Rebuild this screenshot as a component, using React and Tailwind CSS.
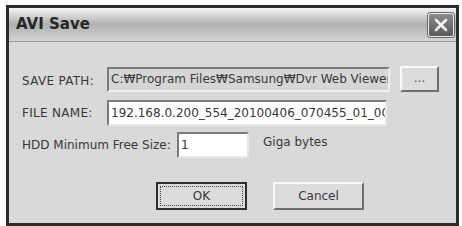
export default function App() {
  const font = { fontFamily: '"DejaVu Sans", Verdana, sans-serif' };
  return (
    <div className="w-[462px] h-[226px] bg-white pt-[5px] pl-[6px]" style={font}>
      <div className="w-[453px] h-[221px] border-[3px] border-[#2b2b2b] bg-[#d9d9d9] flex flex-col">
        {/* title bar */}
        <div className="h-[34px] flex items-center justify-between pl-[7px] pr-[2px] bg-gradient-to-b from-[#f6f6f6] via-[#b0b0b0] to-[#d4d4d4] border-b border-[#9a9a9a]">
          <span className="text-[15px] font-bold text-[#262626]">AVI Save</span>
          <button className="w-[26px] h-[24px] rounded-[3px] border border-[#e8e8e8] bg-gradient-to-b from-[#8c8c8c] to-[#5a5a5a] flex items-center justify-center shadow-[0_0_0_1px_#6a6a6a]">
            <svg width="14" height="14" viewBox="0 0 14 14">
              <path d="M2 2 L12 12 M12 2 L2 12" stroke="#f4f4f4" strokeWidth="2.6" strokeLinecap="round" />
            </svg>
          </button>
        </div>

        <div className="flex flex-col pl-[13px] pt-[24px] text-[12px] text-[#383838]">
          {/* save path */}
          <div className="flex items-center">
            <div className="w-[85px] pt-[3px] tracking-[0.3px]">SAVE PATH:</div>
            <div className="w-[283px] h-[25px] bg-[#d6d6d6] border-2 border-t-[#7a7a7a] border-l-[#7a7a7a] border-r-[#f0f0f0] border-b-[#f0f0f0] flex items-center pl-[2px] overflow-hidden whitespace-nowrap">
              C:₩Program Files₩Samsung₩Dvr Web Viewer
            </div>
            <button className="ml-[10px] w-[39px] h-[26px] bg-[#dcdcdc] border-2 border-t-[#f8f8f8] border-l-[#f8f8f8] border-r-[#6e6e6e] border-b-[#6e6e6e] flex items-center justify-center text-[#555] pb-[2px]">
              ...
            </button>
          </div>

          {/* file name */}
          <div className="flex items-center mt-[8px]">
            <div className="w-[85px] tracking-[0.3px]">FILE NAME:</div>
            <div className="w-[280px] h-[26px] bg-white border-2 border-t-[#7a7a7a] border-l-[#7a7a7a] border-r-[#e6e6e6] border-b-[#e6e6e6] flex items-center pl-[2px] overflow-hidden whitespace-nowrap">
              192.168.0.200_554_20100406_070455_01_00.avi
            </div>
          </div>

          {/* hdd */}
          <div className="flex mt-[6px]">
            <div className="w-[155px] pt-[4px]">HDD Minimum Free Size:</div>
            <div className="w-[72px] h-[26px] bg-white border-2 border-t-[#7a7a7a] border-l-[#7a7a7a] border-r-[#e6e6e6] border-b-[#e6e6e6] flex items-center pl-[2px]">
              1
            </div>
            <div className="ml-[14px] pt-[1px]">Giga bytes</div>
          </div>

          {/* buttons */}
          <div className="flex ml-[134px] mt-[24px] gap-[26px]">
            <button className="w-[91px] h-[28px] border-2 border-[#2e2e2e] bg-[#dcdcdc] p-[2px]">
              <div className="w-full h-full border border-dotted border-[#444] flex items-center justify-center">OK</div>
            </button>
            <button className="w-[91px] h-[28px] bg-[#dcdcdc] border-2 border-t-[#f8f8f8] border-l-[#f8f8f8] border-r-[#6e6e6e] border-b-[#6e6e6e] flex items-center justify-center">
              Cancel
            </button>
          </div>
        </div>
      </div>
    </div>
  );
}
